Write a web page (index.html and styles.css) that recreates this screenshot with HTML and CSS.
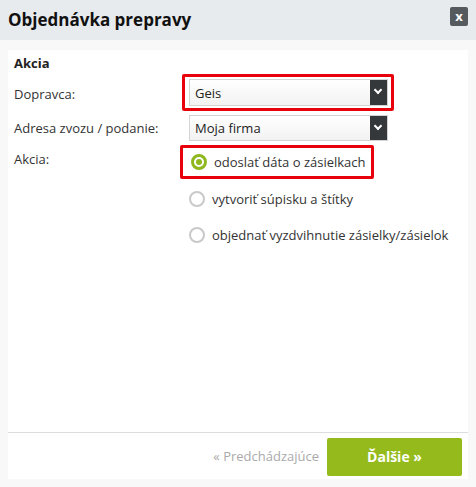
FILE: index.html
```html
<!DOCTYPE html>
<html lang="sk">
<head>
  <meta charset="UTF-8" />
  <title>Objednávka prepravy</title>
  <link rel="stylesheet" href="styles.css">
</head>
<body>
  <div class="dialog">
    <div class="dialog-head">
      <h1>Objednávka prepravy</h1>
      <button class="close">x</button>
    </div>
    <div class="dialog-body">
      <div class="panel">
        <div class="panel-content">
          <h2>Akcia</h2>
          <div class="row">
            <label>Dopravca:</label>
            <div class="hl hl-select">
              <div class="select"><span>Geis</span><i class="arrow"></i></div>
            </div>
          </div>
          <div class="row">
            <label>Adresa zvozu / podanie:</label>
            <div class="select"><span>Moja firma</span><i class="arrow"></i></div>
          </div>
          <div class="row row-radio">
            <label>Akcia:</label>
            <div class="radios">
              <div class="hl hl-radio">
                <div class="radio checked"><i class="dot"></i>odoslať dáta o zásielkach</div>
              </div>
              <div class="radio"><i class="dot"></i>vytvoriť súpisku a štítky</div>
              <div class="radio"><i class="dot"></i>objednať vyzdvihnutie zásielky/zásielok</div>
            </div>
          </div>
        </div>
        <div class="panel-foot">
          <a class="prev">« Predchádzajúce</a>
          <button class="next">Ďalšie »</button>
        </div>
      </div>
    </div>
  </div>
</body>
</html>
```
FILE: styles.css
```css
body {
  margin: 0;
  font-family: 'Open Sans', 'Noto Sans', sans-serif;
  font-size: 13px;
  color: #333;
  background: #f8f8f8;
}
.dialog {
  width: 476px;
  height: 487px;
  display: flex;
  flex-direction: column;
}
.dialog-head {
  height: 40px;
  background: #e8ebee;
  display: flex;
  align-items: center;
  justify-content: space-between;
  padding: 0 8px;
}
.dialog-head h1 {
  margin: 0;
  font-size: 17px;
  font-weight: bold;
  color: #111;
  margin-top: -2px;
}
.close {
  width: 18px;
  height: 19px;
  margin-top: -8px;
  padding: 0;
  border: none;
  border-radius: 2px;
  background: #555a5e;
  color: #fff;
  font-family: 'Open Sans', sans-serif;
  font-weight: bold;
  font-size: 13px;
  line-height: 17px;
}
.dialog-body {
  flex: 1;
  padding: 10px 8px 8px;
}
.panel {
  background: #fff;
  height: 429px;
  display: flex;
  flex-direction: column;
}
.panel-content {
  flex: 1;
  padding: 4px 6px;
}
h2 {
  margin: 0 0 7px;
  font-size: 13px;
  font-weight: bold;
  color: #222;
  line-height: 18px;
}
.row {
  display: grid;
  grid-template-columns: 175px 1fr;
  align-items: center;
  margin-bottom: 7px;
}
.row label {
  color: #333;
}
.row-radio {
  align-items: start;
}
.row-radio label {
  padding-top: 2px;
}
.hl {
  border: 3px solid #e8000b;
  border-radius: 2px;
}
.hl-select {
  width: 198px;
  margin-left: -7px;
  padding: 2px 4px;
  margin-top: -5px;
  margin-bottom: -3px;
}
.select {
  height: 24px;
  border: 1px solid #d4d4d4;
  background: linear-gradient(#fff, #f2f2f2);
  display: flex;
  align-items: center;
  justify-content: space-between;
  padding-left: 5px;
  box-sizing: content-box;
  width: 192px;
}
.hl-select .select {
  height: 25px;
}
.select span {
  color: #222;
}
.arrow {
  width: 17px;
  height: 100%;
  background: #34383b;
  position: relative;
}
.arrow::after {
  content: '';
  position: absolute;
  left: 5px;
  top: 7px;
  width: 4px;
  height: 4px;
  border-right: 2px solid #fff;
  border-bottom: 2px solid #fff;
  transform: rotate(45deg);
}
.radios {
  display: flex;
  flex-direction: column;
}
.hl-radio {
  width: 180px;
  margin-left: -9px;
  padding: 4px 0 4px 8px;
  margin-top: -3px;
  margin-bottom: 10px;
}
.radio {
  display: flex;
  align-items: center;
  gap: 7px;
  height: 20px;
  margin-bottom: 16px;
  color: #333;
}
.hl-radio .radio {
  margin-bottom: 0;
}
.dot {
  width: 12px;
  height: 12px;
  border: 2px solid #c9c9c9;
  border-radius: 50%;
  box-sizing: content-box;
  display: flex;
  align-items: center;
  justify-content: center;
}
.radio.checked .dot {
  border: 3px solid #8fb81e;
  width: 10px;
  height: 10px;
}
.radio.checked .dot::after {
  content: '';
  width: 6px;
  height: 6px;
  border-radius: 50%;
  background: #8fb81e;
}
.panel-foot {
  border-top: 1px solid #ddd;
  height: 46px;
  display: flex;
  align-items: center;
  justify-content: flex-end;
  gap: 8px;
  padding-right: 6px;
}
.prev {
  color: #aaa;
  font-size: 13px;
}
.next {
  width: 135px;
  height: 38px;
  border: none;
  border-radius: 2px;
  background: #94bb1b;
  color: #fff;
  font-family: 'Open Sans', sans-serif;
  font-weight: bold;
  font-size: 14px;
  margin-top: 1px;
}
```
